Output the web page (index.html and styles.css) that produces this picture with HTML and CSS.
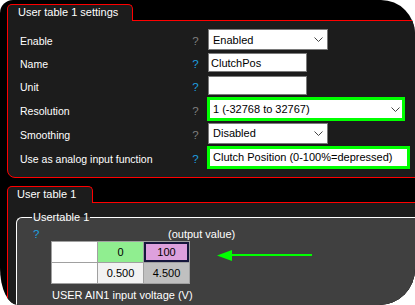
FILE: index.html
```html
<!DOCTYPE html>
<html>
<head>
  <meta charset="utf-8">
  <title>User table 1</title>
  <link rel="stylesheet" href="styles.css">
</head>
<body>
  <div class="screen">

    <section class="panel">
      <div class="tab tab-settings">User table 1 settings</div>
      <div class="panel-body settings">
        <span class="label">Enable</span>
        <span class="help muted">?</span>
        <div class="select w-short">
          <span>Enabled</span>
          <svg class="chev" width="9" height="5" viewBox="0 0 9 5"><polyline points="0.5,0.5 4.5,4.5 8.5,0.5"/></svg>
        </div>

        <span class="label">Name</span>
        <span class="help">?</span>
        <div class="textbox">ClutchPos</div>

        <span class="label">Unit</span>
        <span class="help">?</span>
        <div class="textbox"></div>

        <span class="label">Resolution</span>
        <span class="help muted">?</span>
        <div class="select marked w-res">
          <span>1 (-32768 to 32767)</span>
          <svg class="chev" width="9" height="5" viewBox="0 0 9 5"><polyline points="0.5,0.5 4.5,4.5 8.5,0.5"/></svg>
        </div>

        <span class="label">Smoothing</span>
        <span class="help muted">?</span>
        <div class="select w-short">
          <span>Disabled</span>
          <svg class="chev" width="9" height="5" viewBox="0 0 9 5"><polyline points="0.5,0.5 4.5,4.5 8.5,0.5"/></svg>
        </div>

        <span class="label">Use as analog input function</span>
        <span class="help">?</span>
        <div class="textbox marked w-func">Clutch Position (0-100%=depressed)</div>
      </div>
    </section>

    <section class="panel">
      <div class="tab tab-table">User table 1</div>
      <div class="panel-body table-body">
        <fieldset class="group">
          <legend>Usertable 1</legend>
          <div class="group-head">
            <span class="help">?</span>
            <span class="axis-title">(output value)</span>
          </div>
          <table class="map">
            <tr>
              <td class="blank"></td>
              <td class="low">0</td>
              <td class="high sel">100</td>
            </tr>
            <tr>
              <td class="blank"></td>
              <td class="volt">0.500</td>
              <td class="volt dark">4.500</td>
            </tr>
          </table>
          <div class="axis-label">USER AIN1 input voltage (V)</div>
        </fieldset>
      </div>
    </section>

    <!-- annotation arrow drawn over the screenshot -->
    <svg class="arrow" width="96" height="12" viewBox="0 0 96 12">
      <polygon points="0,5.5 15,0 15,11"/>
      <rect x="14" y="4" width="81" height="2"/>
    </svg>
  </div>
</body>
</html>
```

FILE: styles.css
```css
body {
  margin: 0;
  background-color: #fff;
  font-family: "Liberation Sans", Arial, sans-serif;
}

.screen {
  position: relative;
  width: 415px;
  height: 305px;
  box-sizing: border-box;
  padding-top: 4px;
  overflow: hidden;
  background-color: #000;
  color: #fff;
  font-size: 11px;
  border-radius: 13px 34px 36px 18px / 13px 34px 36px 37px;
}

.panel {
  margin-left: 7px;
  margin-right: -30px;
}

.panel + .panel {
  margin-top: 8px;
}

.tab {
  position: relative;
  z-index: 1;
  box-sizing: border-box;
  height: 17px;
  margin-bottom: -1px;
  padding-left: 10px;
  line-height: 15px;
  background-color: #1c1c1c;
  border: 1px solid #f00;
  border-bottom: none;
  border-radius: 5px 5px 0 0;
}

.tab-settings {
  width: 126px;
}

.tab-table {
  width: 86px;
  padding-left: 9px;
}

.panel-body {
  background-color: #1c1c1c;
  border: 1px solid #f00;
  border-radius: 0 0 0 8px;
}

/* settings grid */
.settings {
  display: grid;
  grid-template-columns: 168px 15px 1fr;
  grid-template-rows: 23px 23px 23px 24px 24px 24px;
  align-items: center;
  padding: 7px 0 8px 12px;
}

.label {
  padding-top: 3px;
  font-size: 10.5px;
}

.help {
  padding-top: 3px;
  text-align: center;
  font-size: 11.5px;
  color: #1ea0e0;
}

.help.muted {
  color: #808080;
}

.select,
.textbox {
  display: flex;
  align-items: center;
  box-sizing: border-box;
  margin-left: 5px;
  background-color: #fff;
  color: #000;
  border: 1px solid #7a7a7a;
  font-size: 11px;
}

.select {
  justify-content: space-between;
  height: 21px;
  padding: 0 4px 0 4px;
}

.w-short {
  width: 120px;
}

.textbox {
  width: 99px;
  height: 19px;
  padding-left: 2px;
}

.chev {
  fill: none;
  stroke: #444;
  stroke-width: 1;
}

.marked {
  margin-left: 4px;
  border: 3px solid #0f0;
  padding-left: 3px;
}

.w-res {
  width: 198px;
  height: 24px;
  padding-right: 2px;
}

.w-func {
  width: 203px;
  height: 23px;
  padding-left: 3px;
}

/* user table panel */
.table-body {
  border-bottom: none;
  min-height: 120px;
  padding: 8px 0 0 8px;
}

.group {
  margin: 0;
  min-width: 0;
  padding: 0 0 20px 16px;
  background-color: #404040;
  border: 1px solid #fff;
  border-right: none;
  border-bottom: none;
  border-radius: 6px 0 0 0;
}

.group legend {
  margin-left: -1px;
  padding: 0 1px;
  line-height: 13px;
  font-size: 11px;
}

.group-head {
  display: flex;
  margin-top: 4px;
  line-height: 13px;
}

.group-head .help {
  width: 6px;
  padding-top: 0;
  text-align: left;
}

.axis-title {
  margin-left: 129px;
}

.map {
  margin-left: 18px;
  border-collapse: collapse;
  color: #000;
  font-size: 11px;
}

.map td {
  width: 45px;
  height: 20px;
  padding: 0;
  text-align: center;
  border: 1px solid #a0a0a0;
}

.map .blank {
  background-color: #fff;
}

.map .low {
  background-color: #90ee90;
}

.map .high {
  background-color: #dda0dd;
}

.map .sel {
  box-shadow: inset 0 0 0 2px #16163c;
}

.map .volt {
  background-color: #f2f2f2;
}

.map .dark {
  background-color: #c0c0c0;
}

.axis-label {
  margin: 5px 0 0 19px;
  line-height: 13px;
}

.arrow {
  position: absolute;
  left: 217px;
  top: 250px;
  fill: #0f0;
}
```
